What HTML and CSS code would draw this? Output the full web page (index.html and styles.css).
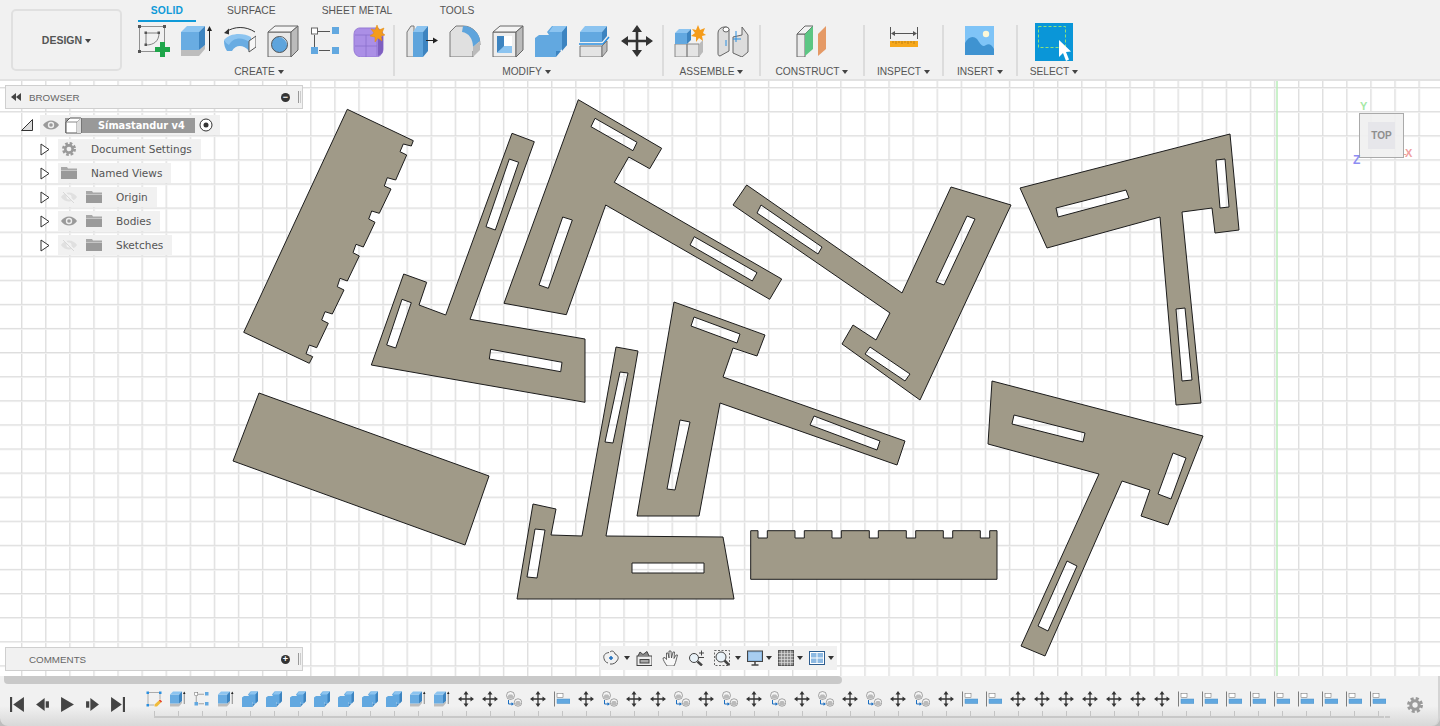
FILE: index.html
```html
<!DOCTYPE html>
<html lang="en">
	<head>
		<meta charset="UTF-8">
		<title>Símastandur v4</title>
		<link rel="stylesheet" href="styles.css">
	</head>
	<body>
		<svg class="defs" xmlns="http://www.w3.org/2000/svg">
			<symbol id="i-sketch" viewBox="0 0 32 32">
				<path d="M1.500 1.500H26.500V26.500H1.500Z" fill="none" stroke="#777" stroke-width=".8"/>
				<path d="M8 8H21M8 8V20M21 8C21 16 16 20 8 20" fill="none" stroke="#666" stroke-width=".8"/>
				<path d="M0 0h3v3h-3zM25 0h3v3h-3zM0 25h3v3h-3zM6.500 6.500h2.500v2.500h-2.500zM19.500 6.500h2.500v2.500h-2.500zM6.500 18.500h2.500v2.500h-2.500z" fill="#555"/>
				<path d="M22 17h5v5h5v5h-5v5h-5v-5h-5v-5h5z" fill="#1ea64a"/>
			</symbol>
			<symbol id="i-extrude" viewBox="0 0 32 32">
				<path d="M0 25H18L24 20V24L18 31H0Z" fill="#bdbdbd"/>
				<path d="M0 7H18V25H0Z" fill="#69ace2"/>
				<path d="M0 7L6 1H24L18 7Z" fill="#8cc4f0"/>
				<path d="M18 7L24 1V20L18 25Z" fill="#3d84c0"/>
				<path d="M28.500 3V26" stroke="#222" stroke-width="1"/>
				<path d="M28.500 1L31 6H26Z" fill="#222"/>
			</symbol>
			<symbol id="i-revolve" viewBox="0 0 32 32">
				<path d="M2 7C10 1 22 1 31 7" fill="none" stroke="#333"/>
				<path d="M0 8L5 3.500V9.500Z" fill="#333"/>
				<path d="M0 16C4 9 18 8 27 13L25 26C20 20 12 19 8 26H3C1 23 0 20 0 16Z" fill="#69ace2"/>
				<path d="M0 15C5 8 19 7 27 12L25 17C19 12 9 12 5 20C3 19 1 17 0 15Z" fill="#8cc4f0"/>
				<path d="M25 16L32 11V22L25 27Z" fill="#f6f6f6" stroke="#555"/>
			</symbol>
			<symbol id="i-hole" viewBox="0 0 32 32">
				<path d="M1 7H24V32H1Z" fill="#e8e8e8" stroke="#666"/>
				<path d="M1 7L8 1H31L24 7Z" fill="#f4f4f4" stroke="#666"/>
				<path d="M24 7L31 1V25L24 32Z" fill="#bbb" stroke="#666"/>
				<circle cx="12.500" cy="19.500" r="8" fill="#5ea4dc" stroke="#555"/>
				<path d="M12 12A7.500 7.500 0 0 1 20 20A9 9 0 0 0 12 12Z" fill="#fff"/>
			</symbol>
			<symbol id="i-points" viewBox="0 0 32 32">
				<path d="M8 6.500H20M4.500 10V22M9 25.500H20" stroke="#555" fill="none"/>
				<rect x="1.500" y="3" width="6" height="6" fill="#fff" stroke="#666"/>
				<rect x="22" y="2" width="7" height="7" fill="#62a8e0"/>
				<rect x="1" y="22" width="7" height="7" fill="#62a8e0"/>
				<rect x="22" y="22" width="7" height="7" fill="#62a8e0"/>
			</symbol>
			<symbol id="i-form" viewBox="0 0 32 32">
				<path d="M7 3H22C26 3 30 6 30 10V24C30 28 27 32 23 32H9C4 32 1 29 1 24V10C1 6 3 3 7 3Z" fill="#ab8fe6" stroke="#9578d4"/>
				<path d="M25 14L30 11V25C30 28 28 30 25 31Z" fill="#7e5fc0"/>
				<path d="M2 10H24M2 21H24M13 10V32M24 10V31" fill="none" stroke="#8a6fcc" stroke-width=".8"/>
				<path d="M24 0L26 5L31 3L29 8L32 10L28 11L29 16L25 13L22 17L22 12L17 11L21 8L18 4L22 5Z" fill="#f59c1a" stroke="#e08a10" stroke-width=".5"/>
			</symbol>
			<symbol id="i-press" viewBox="0 0 32 32">
				<path d="M1 7L5 1H8V32H1Z" fill="#e4e4e4" stroke="#777"/>
				<path d="M7 7H17V32H7Z" fill="#5ea4dc"/>
				<path d="M7 7L11 1H22L17 7Z" fill="#8cc4f0"/>
				<path d="M17 7L22 1V26L17 32Z" fill="#3d84c0"/>
				<path d="M20 15.500H28" stroke="#222"/>
				<path d="M32 15.500L27 12.500V18.500Z" fill="#222"/>
			</symbol>
			<symbol id="i-fillet" viewBox="0 0 32 32">
				<path d="M1 7L7 1H14C24 1 31 9 31 20L24 26V32H1Z" fill="#e0e0e0" stroke="#777"/>
				<path d="M14 1C24 1 31 9 31 16L24 22C24 14 20 8 13 7Z" fill="#5ea4dc"/>
				<path d="M24 22L31 16V25L24 32Z" fill="#bbb"/>
			</symbol>
			<symbol id="i-shell" viewBox="0 0 32 32">
				<path d="M1 7H24V32H1Z" fill="#eee" stroke="#666"/>
				<path d="M1 7L8 1H31L24 7Z" fill="#f4f4f4" stroke="#666"/>
				<path d="M24 7L31 1V25L24 32Z" fill="#bbb" stroke="#666"/>
				<path d="M5 11H20V28H5Z" fill="#fff"/>
				<path d="M5 11H12V22L5 28Z" fill="#3d84c0"/>
				<path d="M12 21H20V28H5Z" fill="#8cc4f0"/>
			</symbol>
			<symbol id="i-combine" viewBox="0 0 32 32">
				<path d="M0 13L4 10H14V22H21V32H0Z" fill="#62a8e0"/>
				<path d="M12 7L17 1H32V20L25 26H21V22H14V10Z" fill="#62a8e0"/>
				<path d="M14 7L18 1H32L27 7Z" fill="#8cc4f0"/>
				<path d="M27 7L32 1V20L27 26Z" fill="#3d84c0"/>
				<path d="M21 26L26 26L21 32Z" fill="#3d84c0"/>
			</symbol>
			<symbol id="i-split" viewBox="0 0 32 32">
				<path d="M2 7H24V17H2Z" fill="#62a8e0"/>
				<path d="M2 7L7 1H29L24 7Z" fill="#8cc4f0"/>
				<path d="M24 7L29 1V11L24 17Z" fill="#3d84c0"/>
				<path d="M1 19H25L31 12" fill="none" stroke="#2a8fe0" stroke-width="1.500"/>
				<path d="M2 21H24V32H2Z" fill="#e4e4e4" stroke="#777"/>
				<path d="M24 21L29 16V26L24 32Z" fill="#bbb" stroke="#777"/>
			</symbol>
			<symbol id="i-move" viewBox="0 0 32 32">
				<path d="M14.700 6H17.300V14.700H26V17.300H17.300V26H14.700V17.300H6V14.700H14.700Z" fill="#333"/>
				<path d="M16 0L21 7H11ZM16 32L11 25H21ZM0 16L7 11V21ZM32 16L25 21V11Z" fill="#333"/>
			</symbol>
			<symbol id="i-component" viewBox="0 0 32 32">
				<path d="M1 19H13V32H1ZM13 19H25V32H13Z" fill="#e4e4e4" stroke="#888"/>
				<path d="M25 19L29 15V27L25 32Z" fill="#bbb"/>
				<path d="M1 8H13V19H1Z" fill="#62a8e0"/>
				<path d="M1 8L5 4H17L13 8Z" fill="#8cc4f0"/>
				<path d="M13 8L17 4V15L13 19Z" fill="#3d84c0"/>
				<path d="M24 0L26 5L31 3L29 8L32 10L28 11L29 16L25 13L22 17L22 12L17 11L21 8L18 4L22 5Z" fill="#f59c1a"/>
			</symbol>
			<symbol id="i-joint" viewBox="0 0 32 32">
				<path d="M1 8C1 2 10 0 12 4V26L3 31C1 31 1 29 1 28Z" fill="#ddd" stroke="#666"/>
				<ellipse cx="9" cy="4.500" rx="3" ry="2.500" fill="#fff" stroke="#666"/>
				<path d="M16 12L25 10V2L31 10V27L25 32L16 28Z" fill="#ddd" stroke="#666"/>
				<path d="M19 6V17M16 14H24" stroke="#2a8fe0"/>
				<path d="M9 15V21" stroke="#2a8fe0"/>
			</symbol>
			<symbol id="i-construct" viewBox="0 0 32 32">
				<path d="M1 9H9V32H1Z" fill="#eaeaea" stroke="#666"/>
				<path d="M1 9L9 1H17L9 9Z" fill="#f2f2f2" stroke="#666"/>
				<path d="M9 9L17 1V24L9 31Z" fill="#5cc683"/>
				<path d="M22 9L30 1V24L22 31Z" fill="#e59a66"/>
			</symbol>
			<symbol id="i-ruler" viewBox="0 0 28 32">
				<path d="M.5 2V14M27.500 2V14" stroke="#555"/>
				<path d="M2 8.500H26" stroke="#555"/>
				<path d="M1 8.500L5 6V11ZM27 8.500L23 6V11Z" fill="#555"/>
				<rect y="16" width="28" height="6" fill="#f7a81b"/>
				<path d="M3 16v2M6 16v3M9 16v2M12 16v3M15 16v2M18 16v3M21 16v2M24 16v3" stroke="#9a6a10" stroke-width=".6"/>
			</symbol>
			<symbol id="i-picture" viewBox="0 0 32 32">
				<rect x="1" y="1" width="29" height="29" fill="#7fc4f7"/>
				<circle cx="22" cy="9" r="3.200" fill="#fdf8d8"/>
				<path d="M1 30V18C4 12 9 10 13 14C16 18 18 23 22 20C25 18 28 20 30 24V30Z" fill="#3f93d1"/>
			</symbol>
			<symbol id="i-eye" viewBox="0 0 16 10">
				<path d="M0 5C4 -1 12 -1 16 5C12 11 4 11 0 5Z" fill="#9a9a9a"/>
				<circle cx="8" cy="5" r="3.200" fill="#eee"/>
				<circle cx="8" cy="5" r="1.800" fill="#9a9a9a"/>
			</symbol>
			<symbol id="i-eyeoff" viewBox="0 0 16 12">
				<path d="M0 6C4 0 12 0 16 6C12 12 4 12 0 6Z" fill="#e0e0e0"/>
				<circle cx="8" cy="6" r="2.500" fill="#f2f2f2"/>
				<path d="M2 0L14 12" stroke="#f2f2f2" stroke-width="2"/>
				<path d="M2 1L13 12" stroke="#d8d8d8"/>
			</symbol>
			<symbol id="i-folder" viewBox="0 0 16 12">
				<path d="M0 0H6L7 1.500H16V3H0Z" fill="#a8a8a8"/>
				<path d="M0 3.500H16V12H0Z" fill="#9a9a9a"/>
			</symbol>
			<symbol id="i-gear" viewBox="0 0 16 16">
				<circle cx="8" cy="8" r="6.500" fill="none" stroke="#9a9a9a" stroke-width="3" stroke-dasharray="3 2.100"/>
				<circle cx="8" cy="8" r="4.200" fill="none" stroke="#9a9a9a" stroke-width="3"/>
			</symbol>
			<symbol id="i-tlsketch" viewBox="0 0 32 32">
				<path d="M4 3H28M4 3V28M4 28H16M28 3V16" fill="none" stroke="#666"/>
				<path d="M1 1h5v5h-5zM26 1h5v5h-5zM1 26h5v5h-5z" fill="#2a8fe0"/>
				<path d="M28 17L32 21L22 31L17 31L17 27Z" fill="#f0bb3c"/>
				<path d="M28 17L32 21L30 23L26 19Z" fill="#e23c3c"/>
			</symbol>
			<symbol id="i-align" viewBox="0 0 32 32">
				<path d="M1 1V31" stroke="#555" stroke-width="1.500"/>
				<rect x="6" y="4.500" width="12" height="8" fill="#fff" stroke="#666"/>
				<rect x="6" y="16" width="26" height="9" fill="#62a8e0" stroke="#4a90c8"/>
			</symbol>
			<symbol id="i-link" viewBox="0 0 32 32">
				<circle cx="9" cy="9" r="8" fill="#f4f4f4" stroke="#555"/>
				<path d="M2.500 11A7 7 0 0 0 15.500 11L12 7H6Z" fill="#bbb"/>
				<circle cx="24" cy="23" r="7.500" fill="#f4f4f4" stroke="#555"/>
				<path d="M18 25A6.500 6.500 0 0 0 30 25L27 20H21Z" fill="#bbb"/>
				<path d="M5 18V26H13" fill="none" stroke="#1c6fc0" stroke-width="2"/>
				<path d="M16 26L11 22.500V29.500Z" fill="#1c6fc0"/>
			</symbol>
		</svg>

		<div class="app">
			<header class="toolbar">
				<button class="design-btn">DESIGN<span class="caret"></span></button>
				<div class="ribbon">
					<nav class="tabs">
						<a class="tab active solid-tab">SOLID</a>
						<a class="tab surface-tab">SURFACE</a>
						<a class="tab sheet-tab">SHEET METAL</a>
						<a class="tab tools-tab">TOOLS</a>
					</nav>
					<div class="groups">
						<section class="group create">
							<div class="icons">
								<svg class="ic"><use href="#i-sketch"/></svg>
								<svg class="ic"><use href="#i-extrude"/></svg>
								<svg class="ic"><use href="#i-revolve"/></svg>
								<svg class="ic"><use href="#i-hole"/></svg>
								<svg class="ic"><use href="#i-points"/></svg>
								<svg class="ic"><use href="#i-form"/></svg>
							</div>
							<div class="label">CREATE<span class="caret"></span></div>
						</section>
						<section class="group modify">
							<div class="icons">
								<svg class="ic"><use href="#i-press"/></svg>
								<svg class="ic"><use href="#i-fillet"/></svg>
								<svg class="ic"><use href="#i-shell"/></svg>
								<svg class="ic"><use href="#i-combine"/></svg>
								<svg class="ic"><use href="#i-split"/></svg>
								<svg class="ic"><use href="#i-move"/></svg>
							</div>
							<div class="label">MODIFY<span class="caret"></span></div>
						</section>
						<section class="group assemble">
							<div class="icons">
								<svg class="ic"><use href="#i-component"/></svg>
								<svg class="ic"><use href="#i-joint"/></svg>
							</div>
							<div class="label">ASSEMBLE<span class="caret"></span></div>
						</section>
						<section class="group construct">
							<div class="icons">
								<svg class="ic"><use href="#i-construct"/></svg>
							</div>
							<div class="label">CONSTRUCT<span class="caret"></span></div>
						</section>
						<section class="group inspect">
							<div class="icons">
								<svg class="ic"><use href="#i-ruler"/></svg>
							</div>
							<div class="label">INSPECT<span class="caret"></span></div>
						</section>
						<section class="group insert">
							<div class="icons">
								<svg class="ic"><use href="#i-picture"/></svg>
							</div>
							<div class="label">INSERT<span class="caret"></span></div>
						</section>
						<section class="group select no-sep">
							<div class="icons">
								<svg class="select-ic" viewBox="0 0 38 38">
									<rect width="38" height="38" fill="#0a96d8"/>
									<rect x="3.500" y="3.500" width="27" height="21" fill="none" stroke="#8ee27a" stroke-dasharray="3 2"/>
									<path d="M24 17L24 34L28 30L31 38L34 36.500L31 29L36 28.500Z" fill="#fff"/>
								</svg>
							</div>
							<div class="label">SELECT<span class="caret"></span></div>
						</section>
					</div>
				</div>
			</header>

			<main class="canvas">
				<svg class="model" viewBox="0 81 1440 595">
					<path class="axis" d="M1277 81V676"/>
					<path class="part" d="M347.300 109.300L413.300 140.700L411.300 146L403.300 144L400 151.700L406.700 155L395.700 180L387.300 177.700L384.300 186L391 189L379.300 213.300L371.700 211L368.700 219L375 222.300L363.300 247L356 244.300L353 252.700L359.300 256L347.300 281L340 278.300L337.300 286.700L344 290L332.300 314L325 311.700L321.700 320L328.300 323.300L316.700 347.700L309.300 345L306 353.700L312.700 356.700L309.300 363.300L243.700 332.300Z"/>
					<path class="part" d="M512 133.300L534.300 141.700L470 319.300L585 339L585 402.300L371.300 365L403.700 274L426.700 282.300L419 305L445.700 315ZM509.300 159L518.700 162.300L495.300 230L486 226.700ZM402 299.300L411.300 302.700L395.700 348L386.700 345ZM490.700 349.300L562 362.300L560.700 371.700L489.300 359Z"/>
					<path class="part" d="M578.300 99.700L661.700 148.300L649.700 168.700L628.700 157L614.300 182.300L781.700 279L769.700 299.300L605.700 205L566.300 314.700L504 303.300ZM595 118.300L637 142.300L633 150.700L591 126.700ZM562.700 217L572.300 220L548.300 288.300L539 285ZM694.300 236.700L757 272.700L752.300 281L690 245Z"/>
					<path class="part" d="M746.700 185L902 293L951 187L1011 205L920 400L842 344L853 325L876 340L890 313L733 205ZM761 205L822 247L818 254L757 213ZM967 216L975 219L944 285L936 282ZM870 347L910 374L905 381L865 354Z"/>
					<path class="part" d="M1020 188L1230 134L1239 230L1215 233L1212 208L1182 212L1201 403L1176 405L1160 217L1047 248ZM1056 208L1126 190L1129 198L1058 217ZM1216 160L1225 159L1229 207L1220 208ZM1176 309L1185 308L1192 380L1182 381Z"/>
					<path class="part" d="M674 302L765 335L757 356L733 348L723 377L905 441L897 465L720 403L699 516L637 516ZM694 317L740 334L737 343L691 326ZM680 420L690 422L675 490L667 489ZM814 416L880 441L877 450L810 425Z"/>
					<path class="part" d="M616 347L638 351L606 536L723 537L734 599L517 599L533 504L556 509L551 535L582 536ZM620 372L628 373L613 443L605 442ZM535 529L545 530L537 578L527 577ZM632 563L704 563L704 573L632 573Z"/>
					<path class="part" d="M992 381L1203 436L1168 525L1141 516L1150 490L1122 481L1045 656L1021 646L1099 474L988 444ZM1014 415L1085 433L1083 442L1012 424ZM1173 453L1186 458L1171 499L1158 494ZM1067 561L1077 566L1048 631L1038 626Z"/>
					<path class="part" d="M259 393L489 476L465 545L233 461Z"/>
					<path class="part" d="M750.700 530.700H758V538H767.300V530.700H795V538H804.300V530.700H832V538H841.300V530.700H869.300V538H878.300V530.700H906.300V538H915.700V530.700H943.300V538H952.700V530.700H980.300V538H989.700V530.700H997V579.300H750.700Z"/>
				</svg>

				<aside class="side">
					<div class="panel-head">
						<svg class="collapse" viewBox="0 0 10 8"><path d="M5 0V8L0 4ZM10 0V8L5 4Z" fill="#444"/></svg>
						<span class="panel-title">BROWSER</span>
						<span class="round-btn">&minus;</span>
						<span class="grip"></span>
					</div>
					<div class="tree">
						<div class="row root">
							<svg class="corner" viewBox="0 0 12 12"><path d="M.5 11.500L11.500 .5V11.500Z" fill="#ddd" stroke="#333"/></svg>
							<div class="chip root-chip">
								<svg class="eye"><use href="#i-eye"/></svg>
								<div class="root-name">
									<svg class="box" viewBox="0 0 17 17"><path d="M1 5L5 1H16V16H1Z" fill="#fff" stroke="#555"/><path d="M1 5H12V16M12 5L16 1" fill="none" stroke="#888"/><path d="M12 5L16 1V16H12Z" fill="#ddd"/></svg>
									<span>Símastandur v4</span>
								</div>
								<svg class="radio" viewBox="0 0 14 14"><circle cx="7" cy="7" r="6" fill="#fff" stroke="#333"/><circle cx="7" cy="7" r="2.500" fill="#333"/></svg>
							</div>
						</div>
						<div class="row">
							<svg class="arrow" viewBox="0 0 10 13"><path d="M1 1L9 6.500L1 12Z" fill="#fff" stroke="#333"/></svg>
							<div class="chip"><svg class="node"><use href="#i-gear"/></svg><span class="name">Document Settings</span></div>
						</div>
						<div class="row">
							<svg class="arrow" viewBox="0 0 10 13"><path d="M1 1L9 6.500L1 12Z" fill="#fff" stroke="#333"/></svg>
							<div class="chip"><svg class="node"><use href="#i-folder"/></svg><span class="name">Named Views</span></div>
						</div>
						<div class="row">
							<svg class="arrow" viewBox="0 0 10 13"><path d="M1 1L9 6.500L1 12Z" fill="#fff" stroke="#333"/></svg>
							<div class="chip"><svg class="node"><use href="#i-eyeoff"/></svg><svg class="node folder2"><use href="#i-folder"/></svg><span class="name">Origin</span></div>
						</div>
						<div class="row">
							<svg class="arrow" viewBox="0 0 10 13"><path d="M1 1L9 6.500L1 12Z" fill="#fff" stroke="#333"/></svg>
							<div class="chip"><svg class="node"><use href="#i-eye"/></svg><svg class="node folder2"><use href="#i-folder"/></svg><span class="name">Bodies</span></div>
						</div>
						<div class="row">
							<svg class="arrow" viewBox="0 0 10 13"><path d="M1 1L9 6.500L1 12Z" fill="#fff" stroke="#333"/></svg>
							<div class="chip"><svg class="node"><use href="#i-eyeoff"/></svg><svg class="node folder2"><use href="#i-folder"/></svg><span class="name">Sketches</span></div>
						</div>
					</div>
					<div class="panel-head comments">
						<span class="panel-title">COMMENTS</span>
						<span class="round-btn">+</span>
						<span class="grip"></span>
					</div>
				</aside>

				<div class="viewcube">
					<span class="axis-y">Y</span>
					<div class="cube-face"><span>TOP</span></div>
					<span class="axis-z">Z</span>
					<span class="axis-dash"></span>
					<span class="axis-x">X</span>
				</div>

				<div class="navbar">
					<svg class="nav-ic first" viewBox="0 0 16 16"><path d="M6 2.500C2 3 0 5.500 1 8.500C1.500 11 3 12.500 5 13M7 2C9 0 11.500 1.500 12 4C15 5 16 8 14.500 10C13 13 10 14.500 7 14" fill="none" stroke="#555"/><path d="M6 8H10M8 6V10" stroke="#1c6fc0" stroke-width="1.500"/></svg><span class="caret nav-caret wide-caret"></span>
					<svg class="nav-ic" viewBox="0 0 16 16"><rect x="1" y="6" width="15" height="9.500" fill="#eee" stroke="#444"/><rect x="4" y="9.500" width="9" height="3.500" fill="#aaa" stroke="#444"/><path d="M2 6L4 2L7 4.500L11 1.500L13 6" fill="#888" stroke="#444"/></svg>
					<svg class="nav-ic far" viewBox="0 0 16 16"><path d="M5 16C3 13 1 10 1 8L3 7.500L4.500 9.500V3L6 3L7 8V1H9L9.500 8L11 2H12.500L12 8.500L14 5H15.500L13.500 12.500L12 16Z" fill="#f8f8f8" stroke="#444" stroke-width=".8"/></svg>
					<svg class="nav-ic far" viewBox="0 0 16 16"><circle cx="6" cy="8" r="4.500" fill="#e9f2f8" stroke="#444"/><path d="M9.500 11.500L14 15.500" stroke="#444" stroke-width="2.500"/><path d="M11 3H16M13.500 .5V5.500M11 7.500H16" stroke="#444"/></svg>
					<svg class="nav-ic far" viewBox="0 0 16 16"><rect x=".5" y=".5" width="15" height="15" fill="none" stroke="#666" stroke-dasharray="2 1.500"/><circle cx="7" cy="7" r="5" fill="#e9f2f8" stroke="#444"/><path d="M10.500 10.500L15 15" stroke="#444" stroke-width="2.500"/></svg><span class="caret nav-caret wide-caret"></span>
					<svg class="nav-ic" viewBox="0 0 16 16"><rect x=".5" y="1" width="15" height="10.500" fill="#8db9e2" stroke="#444"/><rect x="2" y="2.500" width="12" height="7.500" fill="#a8cdf0"/><path d="M4.500 15H11.500M8 11.500V15" stroke="#444" stroke-width="1.500"/></svg><span class="caret nav-caret"></span>
					<svg class="nav-ic" viewBox="0 0 16 16"><rect x=".5" y=".5" width="15" height="15" fill="#8c8c8c" stroke="#555"/><path d="M3.500 .5V15.500M6.500 .5V15.500M9.500 .5V15.500M12.500 .5V15.500M.5 3.500H15.500M.5 6.500H15.500M.5 9.500H15.500M.5 12.500H15.500" stroke="#ddd" stroke-width=".7"/></svg><span class="caret nav-caret"></span>
					<svg class="nav-ic" viewBox="0 0 16 16"><rect x=".5" y="1.500" width="15" height="13" fill="#fff" stroke="#2d5d8f"/><path d="M2 3H7.500V7.500H2ZM8.500 3H14V7.500H8.500ZM2 8.500H7.500V13H2ZM8.500 8.500H14V13H8.500Z" fill="#8db9e2"/></svg><span class="caret nav-caret"></span>
				</div>
			</main>

			<footer class="timeline">
				<div class="scroll"><div class="thumb"></div></div>
				<div class="tl-row">
					<div class="controls">
						<svg class="ctl" viewBox="0 0 14 14"><path d="M1 0V14" stroke="#444" stroke-width="2"/><path d="M13 0V14L3 7Z" fill="#444"/></svg>
						<svg class="ctl" viewBox="0 0 14 14"><path d="M9 1V13L1 7Z" fill="#444"/><rect x="10" y="4" width="3" height="6" fill="#444"/></svg>
						<svg class="ctl" viewBox="0 0 14 14"><path d="M1 0V14L13 7Z" fill="#444"/></svg>
						<svg class="ctl" viewBox="0 0 14 14"><path d="M5 1V13L13 7Z" fill="#444"/><rect x="1" y="4" width="3" height="6" fill="#444"/></svg>
						<svg class="ctl" viewBox="0 0 14 14"><path d="M1 0V14L11 7Z" fill="#444"/><path d="M13 0V14" stroke="#444" stroke-width="2"/></svg>
					</div>
					<div class="track">
						<div class="step"><svg class="st"><use href="#i-tlsketch"/></svg></div>
						<div class="step"><svg class="st"><use href="#i-extrude"/></svg></div>
						<div class="step"><svg class="st"><use href="#i-points"/></svg></div>
						<div class="step"><svg class="st"><use href="#i-extrude"/></svg></div>
						<div class="step"><svg class="st"><use href="#i-combine"/></svg></div>
						<div class="step"><svg class="st"><use href="#i-combine"/></svg></div>
						<div class="step"><svg class="st"><use href="#i-combine"/></svg></div>
						<div class="step"><svg class="st"><use href="#i-combine"/></svg></div>
						<div class="step"><svg class="st"><use href="#i-combine"/></svg></div>
						<div class="step"><svg class="st"><use href="#i-combine"/></svg></div>
						<div class="step"><svg class="st"><use href="#i-combine"/></svg></div>
						<div class="step"><svg class="st"><use href="#i-extrude"/></svg></div>
						<div class="step"><svg class="st"><use href="#i-extrude"/></svg></div>
						<div class="step"><svg class="st"><use href="#i-move"/></svg></div>
						<div class="step"><svg class="st"><use href="#i-move"/></svg></div>
						<div class="step"><svg class="st"><use href="#i-link"/></svg></div>
						<div class="step"><svg class="st"><use href="#i-move"/></svg></div>
						<div class="step"><svg class="st"><use href="#i-align"/></svg></div>
						<div class="step"><svg class="st"><use href="#i-move"/></svg></div>
						<div class="step"><svg class="st"><use href="#i-link"/></svg></div>
						<div class="step"><svg class="st"><use href="#i-move"/></svg></div>
						<div class="step"><svg class="st"><use href="#i-move"/></svg></div>
						<div class="step"><svg class="st"><use href="#i-link"/></svg></div>
						<div class="step"><svg class="st"><use href="#i-move"/></svg></div>
						<div class="step"><svg class="st"><use href="#i-link"/></svg></div>
						<div class="step"><svg class="st"><use href="#i-move"/></svg></div>
						<div class="step"><svg class="st"><use href="#i-link"/></svg></div>
						<div class="step"><svg class="st"><use href="#i-move"/></svg></div>
						<div class="step"><svg class="st"><use href="#i-link"/></svg></div>
						<div class="step"><svg class="st"><use href="#i-move"/></svg></div>
						<div class="step"><svg class="st"><use href="#i-link"/></svg></div>
						<div class="step"><svg class="st"><use href="#i-move"/></svg></div>
						<div class="step"><svg class="st"><use href="#i-link"/></svg></div>
						<div class="step"><svg class="st"><use href="#i-move"/></svg></div>
						<div class="step"><svg class="st"><use href="#i-align"/></svg></div>
						<div class="step"><svg class="st"><use href="#i-align"/></svg></div>
						<div class="step"><svg class="st"><use href="#i-move"/></svg></div>
						<div class="step"><svg class="st"><use href="#i-move"/></svg></div>
						<div class="step"><svg class="st"><use href="#i-move"/></svg></div>
						<div class="step"><svg class="st"><use href="#i-move"/></svg></div>
						<div class="step"><svg class="st"><use href="#i-move"/></svg></div>
						<div class="step"><svg class="st"><use href="#i-move"/></svg></div>
						<div class="step"><svg class="st"><use href="#i-move"/></svg></div>
						<div class="step"><svg class="st"><use href="#i-align"/></svg></div>
						<div class="step"><svg class="st"><use href="#i-align"/></svg></div>
						<div class="step"><svg class="st"><use href="#i-align"/></svg></div>
						<div class="step"><svg class="st"><use href="#i-align"/></svg></div>
						<div class="step"><svg class="st"><use href="#i-align"/></svg></div>
						<div class="step"><svg class="st"><use href="#i-align"/></svg></div>
						<div class="step"><svg class="st"><use href="#i-align"/></svg></div>
						<div class="step"><svg class="st"><use href="#i-align"/></svg></div>
						<div class="step"><svg class="st"><use href="#i-align"/></svg></div>
					</div>
					<svg class="tl-gear"><use href="#i-gear"/></svg>
				</div>
			</footer>
		</div>
	</body>
</html>
```

FILE: styles.css
```css
* {
	margin: 0;
	padding: 0;
	box-sizing: border-box;
}

html, body {
	width: 1440px;
	height: 726px;
	overflow: hidden;
	background-color: #bdbdbd;
	font-family: "Liberation Sans", Arial, sans-serif;
}

.defs {
	display: none;
}

.app {
	width: 1440px;
	height: 726px;
	display: flex;
	flex-direction: column;
}

/* toolbar */

.toolbar {
	height: 81px;
	background-color: #f1f1f1;
	border-bottom: 2px solid #e2e2e2;
	display: flex;
	padding-left: 11px;
}

.design-btn {
	width: 111px;
	height: 62px;
	margin-top: 9px;
	margin-right: 11px;
	background-color: #f1f1f1;
	border: 2px solid #e0e0e0;
	border-radius: 5px;
	font-family: inherit;
	font-size: 10.500px;
	font-weight: bold;
	color: #555;
}

.caret {
	display: inline-block;
	width: 0;
	height: 0;
	margin-left: 3px;
	vertical-align: middle;
	border-left: 3px solid transparent;
	border-right: 3px solid transparent;
	border-top: 4px solid #444;
}

.ribbon {
	flex: 1;
}

.tabs {
	display: flex;
	height: 23px;
}

.tab {
	font-size: 10.300px;
	line-height: 22px;
	color: #555;
	text-align: center;
}

.tab.active {
	color: #0f9ad8;
	font-weight: bold;
	letter-spacing: .2px;
	border-bottom: 2px solid #0f9ad8;
	height: 22px;
}

.solid-tab {
	width: 58px;
	margin-left: 5px;
}

.surface-tab {
	width: 48px;
	margin-left: 31px;
}

.sheet-tab {
	width: 74px;
	margin-left: 45px;
}

.tools-tab {
	width: 38px;
	margin-left: 44px;
}

.groups {
	display: flex;
}

.group {
	height: 51px;
	margin-top: 2px;
	border-right: 2px solid #dcdcdc;
	display: flex;
	flex-direction: column;
	align-items: center;
}

.group.no-sep {
	border-right: 0;
}

.create {
	width: 262px;
	padding-right: 4px;
}

.modify {
	width: 269px;
	padding-left: 2px;
}

.assemble {
	width: 97px;
}

.construct {
	width: 104px;
}

.inspect {
	width: 79px;
}

.insert {
	width: 74px;
}

.select {
	width: 72px;
	margin-top: 0;
}

.icons {
	height: 36px;
	flex: none;
	display: flex;
	gap: 11px;
	align-items: flex-start;
}

.ic {
	width: 32px;
	height: 32px;
	display: block;
}

.select-ic {
	width: 38px;
	height: 38px;
	display: block;
}

.label {
	margin-top: 5px;
	flex: none;
	font-size: 10.200px;
	line-height: 12px;
	color: #555;
	white-space: nowrap;
}

.create .label {
	margin-right: 4px;
}

.modify .label {
	margin-right: 6px;
}

.select .label {
	margin-top: 7px;
}

/* canvas */

.canvas {
	flex: 1;
	position: relative;
	background-color: #fff;
	background-image:
		linear-gradient(to bottom, #dedede 1px, #f0f0f0 1px, #f0f0f0 2px, transparent 2px),
		linear-gradient(to right, #dedede 1px, #f0f0f0 1px, #f0f0f0 2px, transparent 2px);
	background-size: 24.100px 24.100px;
	background-position: 21px 6px;
}

.model {
	position: absolute;
	left: 0;
	top: 0;
	width: 1440px;
	height: 595px;
}

.axis {
	stroke: #b9eeb9;
	stroke-width: 1.500;
	fill: none;
}

.part {
	fill: #a09a88;
	fill-rule: evenodd;
	stroke: #1c1c1c;
	stroke-width: 1;
}

/* browser panel */

.side {
	position: absolute;
	left: 5px;
	top: 4px;
	bottom: 5px;
	width: 298px;
	display: flex;
	flex-direction: column;
}

.panel-head {
	height: 24px;
	background-color: #f1f1f1;
	border: 1px solid #cfcfcf;
	display: flex;
	align-items: center;
	padding-left: 5px;
	color: #666;
}

.panel-head.comments {
	margin-top: auto;
	padding-left: 23px;
}

.collapse {
	width: 10px;
	height: 8px;
	margin-right: 8px;
}

.panel-title {
	font-size: 9.800px;
	flex: 1;
}

.round-btn {
	width: 9px;
	height: 9px;
	border-radius: 50%;
	background-color: #333;
	color: #fff;
	font-size: 9px;
	line-height: 9px;
	font-weight: bold;
	text-align: center;
	margin-right: 8px;
}

.grip {
	width: 3px;
	height: 12px;
	border-left: 1px solid #999;
	border-right: 1px solid #ccc;
	margin-right: 1px;
}

.tree {
	font-family: "DejaVu Sans", sans-serif;
	font-size: 10.500px;
	color: #555;
	padding-top: 4px;
}

.row {
	height: 24px;
	display: flex;
	align-items: center;
	padding-left: 35px;
}

.root {
	padding-left: 16px;
}

.corner {
	width: 12px;
	height: 12px;
	margin-right: 7px;
}

.arrow {
	width: 10px;
	height: 13px;
	margin-right: 8px;
}

.chip {
	height: 20px;
	display: flex;
	align-items: center;
	background-color: #f1f1f1;
	padding: 0 9px 0 3px;
}

.root-chip {
	padding: 0 7px 0 3px;
}

.eye {
	width: 16px;
	height: 10px;
	margin-right: 6px;
}

.root-name {
	height: 15px;
	width: 130px;
	background-color: #999;
	display: flex;
	align-items: center;
	color: #fff;
	font-weight: bold;
	font-size: 9.800px;
}

.box {
	width: 17px;
	height: 17px;
	margin-right: 16px;
}

.radio {
	width: 14px;
	height: 14px;
	margin-left: 4px;
}

.node {
	width: 16px;
	height: 14px;
	margin-right: 14px;
}

.folder2 {
	margin-right: 14px;
}

.node + .folder2 {
	margin-left: -5px;
}

/* view cube */

.viewcube {
	position: absolute;
	left: 1355px;
	top: 20px;
	width: 62px;
	height: 66px;
	font-size: 11px;
	font-weight: bold;
}

.cube-face {
	position: absolute;
	left: 4px;
	top: 12px;
	width: 45px;
	height: 45px;
	background-color: rgba(240, 240, 240, .9);
	border: 1px solid #aaa;
	display: flex;
	align-items: center;
	justify-content: center;
}

.cube-face span {
	width: 27px;
	height: 27px;
	line-height: 27px;
	text-align: center;
	background-color: #e6e6ea;
	color: #8e8e8e;
	font-size: 10px;
}

.axis-y {
	position: absolute;
	left: 5px;
	top: -1px;
	color: #a5e8a5;
}

.axis-z {
	position: absolute;
	left: -2px;
	top: 52px;
	color: #8d8df2;
	font-size: 12px;
}

.axis-x {
	position: absolute;
	left: 50px;
	top: 46px;
	color: #f0a0a0;
}

.axis-dash {
	position: absolute;
	left: 49px;
	top: 53px;
	width: 2px;
	height: 1px;
	background-color: #f0a0a0;
}

/* nav bar */

.navbar {
	position: absolute;
	left: 600px;
	top: 565px;
	width: 237px;
	height: 24px;
	background-color: #f1f1f1;
	display: flex;
	align-items: center;
	padding-left: 3px;
}

.nav-ic {
	width: 16px;
	height: 16px;
	flex: none;
	margin-left: 6px;
}

.nav-ic.first {
	margin-left: 0;
}

.nav-ic.far {
	margin-left: 10px;
}

.nav-caret {
	margin-left: 3px;
	border-top-color: #333;
}

.nav-caret.wide-caret {
	margin-left: 5px;
}

/* timeline */

.timeline {
	height: 50px;
	background: linear-gradient(to bottom, #f1f1f1 30px, #d8d8d8);
	border-right: 2px solid #d4d4d4;
	border-radius: 0 0 8px 8px;
}

.scroll {
	height: 8px;
	padding-left: 4px;
}

.thumb {
	width: 838px;
	height: 8px;
	background-color: #c9c9c9;
	border-radius: 0 4px 4px 4px;
}

.tl-row {
	display: flex;
	padding-top: 7px;
}

.controls {
	width: 142px;
	height: 27px;
	display: flex;
	align-items: center;
	gap: 10px;
	padding-left: 10px;
}

.ctl {
	width: 15px;
	height: 15px;
	flex: none;
}

.track {
	display: flex;
	width: 1248px;
	height: 27px;
	background:
		linear-gradient(#c8c8c8, #c8c8c8) no-repeat 12px 100% / 1230px 2px,
		linear-gradient(#c8c8c8, #c8c8c8) no-repeat 1243px 100% / 5px 2px;
}

.step {
	width: 24px;
	height: 25px;
	position: relative;
	flex: none;
}

.step::after {
	content: "";
	position: absolute;
	left: 12px;
	bottom: 0;
	width: 1px;
	height: 5px;
	background-color: #c4c4c4;
}

.st {
	width: 16px;
	height: 16px;
	display: block;
	margin: 0 auto;
}

.tl-gear {
	width: 16px;
	height: 16px;
	margin: 6px 0 0 17px;
}
```
